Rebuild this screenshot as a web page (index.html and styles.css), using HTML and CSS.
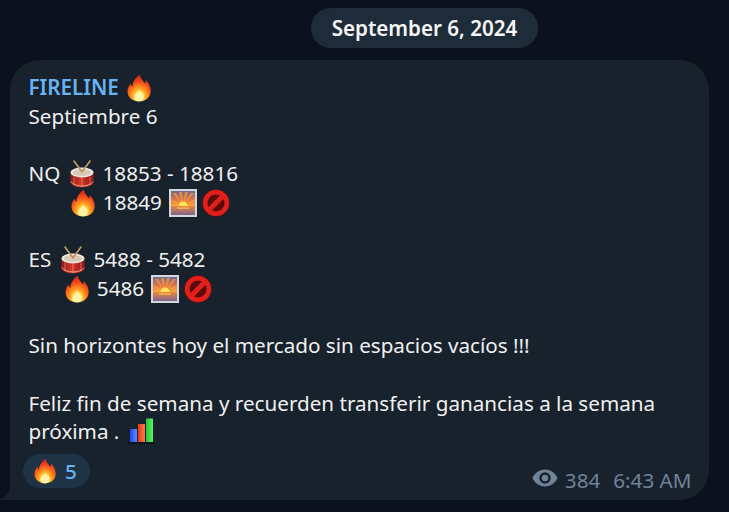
FILE: index.html
```html
<!DOCTYPE html>
<html lang="es">
<head>
<meta charset="utf-8">
<title>FIRELINE</title>
<link rel="stylesheet" href="styles.css">
</head>
<body>
<svg class="defs" width="0" height="0" aria-hidden="true">
  <defs>
    <radialGradient id="fireGrad" cx="0.5" cy="0.82" r="0.72">
      <stop offset="0" stop-color="#fff6c0"/>
      <stop offset="0.22" stop-color="#ffe14d"/>
      <stop offset="0.45" stop-color="#ff9a1f"/>
      <stop offset="0.8" stop-color="#f2441a"/>
      <stop offset="1" stop-color="#d92c14"/>
    </radialGradient>
    <linearGradient id="drumBody" x1="0" x2="1" y1="0" y2="0">
      <stop offset="0" stop-color="#8f1d14"/>
      <stop offset="0.45" stop-color="#d8342a"/>
      <stop offset="1" stop-color="#8c1a12"/>
    </linearGradient>
    <linearGradient id="sunSky" x1="0" x2="0" y1="0" y2="1">
      <stop offset="0" stop-color="#6f6a93"/>
      <stop offset="0.35" stop-color="#e0744a"/>
      <stop offset="0.62" stop-color="#f9a838"/>
      <stop offset="0.64" stop-color="#e88444"/>
      <stop offset="1" stop-color="#7e6590"/>
    </linearGradient>
    <linearGradient id="barBlue" x1="0" x2="1" y1="0" y2="0"><stop offset="0" stop-color="#1f45f0"/><stop offset="1" stop-color="#5f8dff"/></linearGradient>
    <linearGradient id="barRed" x1="0" x2="1" y1="0" y2="0"><stop offset="0" stop-color="#e33a1a"/><stop offset="1" stop-color="#ff7a48"/></linearGradient>
    <linearGradient id="barGreen" x1="0" x2="1" y1="0" y2="0"><stop offset="0" stop-color="#1fc934"/><stop offset="1" stop-color="#5cf06c"/></linearGradient>
    <symbol id="fire" viewBox="0 0 24 28">
      <path fill="url(#fireGrad)" d="M12.5 0.5c1 4.2 3.6 6.3 5.6 8.9 0.5-1.1 0.7-2.2 0.6-3.5 3 3 5 6.9 5 11.2 0 6.300-5 10.400-11.500 10.400S0.500 23.400 0.500 17.300c0-3.300 1.500-5.700 3.200-7.900 0.200 1.500 0.700 2.700 1.700 3.500C5.300 8.200 8.400 4.200 12.500 0.500z"/>
      <path fill="#fff3a8" d="M12.300 16c1.500 2 4.700 3.800 4.700 7 0 2.800-2.200 4.300-5 4.300s-5-1.600-5-4.100c0-3 3.800-4.200 5.300-7.200z"/>
    </symbol>
    <symbol id="drum" viewBox="0 0 24 28">
      <path stroke="#c9a565" stroke-width="1.500" stroke-linecap="round" d="M4 1l8 11M20 1l-8 11"/>
      <path fill="url(#drumBody)" d="M0.500 12v10.500c0 2.800 5.200 4.800 11.500 4.800s11.500-2 11.500-4.800V12z"/>
      <path stroke="#e88f75" stroke-width="0.700" fill="none" d="M4 17v8M12 18v9M20 17v8"/>
      <path fill="none" stroke="#f0a68e" stroke-width="1" d="M0.800 21.500c2 3 6.500 4.500 11.200 4.500s9.200-1.500 11.200-4.500"/>
      <ellipse cx="12" cy="12.500" rx="11.500" ry="5" fill="#f3ece4"/>
      <ellipse cx="12" cy="12.500" rx="9.500" ry="3.600" fill="#d9c9bb"/>
      <path stroke="#b98f52" stroke-width="1.500" stroke-linecap="round" d="M8.500 7l3.500 5M15.500 7l-3.500 5"/>
    </symbol>
    <symbol id="sunset" viewBox="0 0 28 28">
      <rect x="0" y="0" width="28" height="28" fill="#d3d8de"/>
      <rect x="2" y="2" width="24" height="24" fill="url(#sunSky)"/>
      <path fill="#f59a3c" opacity=".8" d="M14 17L4 4h3zM14 17L10 3h3zM14 17L16 3h3zM14 17L22 4h3zM14 17L2.500 10v3zM14 17L25.500 10v3z"/>
      <path fill="#ffe45c" d="M9.500 17a4.500 4.500 0 0 1 9 0z"/>
      <rect x="8" y="18.500" width="12" height="1.200" fill="#ffc34a"/>
    </symbol>
    <symbol id="noentry" viewBox="0 0 28 28">
      <circle cx="14" cy="14" r="13.500" fill="#a00d0a"/>
      <circle cx="14" cy="14" r="10.800" fill="none" stroke="#e0201a" stroke-width="4.500"/>
      <circle cx="14" cy="14" r="8.300" fill="#5a0c0b"/>
      <path stroke="#e0201a" stroke-width="4.800" d="M6.800 21.200L21.200 6.800"/>
    </symbol>
    <symbol id="chart" viewBox="0 0 26 26">
      <rect x="2" y="11" width="7" height="13" fill="url(#barBlue)"/>
      <rect x="10" y="6" width="7" height="18" fill="url(#barRed)"/>
      <rect x="18" y="0.500" width="7" height="23.500" fill="url(#barGreen)"/>
      <rect x="0" y="24" width="26" height="2" fill="#0a1320"/>
    </symbol>
    <symbol id="eye" viewBox="0 0 26 18">
      <path fill="#708499" fill-rule="evenodd" d="M13 0.500C7 0.500 2.500 4.500 0.500 9c2 4.500 6.500 8.500 12.500 8.500S23.500 13.500 25.500 9C23.500 4.500 19 0.500 13 0.500zM13 14.700a5.700 5.700 0 1 1 0-11.400 5.700 5.700 0 0 1 0 11.400zM13 5.800a3.200 3.200 0 1 0 0 6.400 3.200 3.200 0 0 0 0-6.400z"/>
    </symbol>
  </defs>
</svg>

<div class="date-row"><span class="date-pill">September 6, 2024</span></div>

<article class="bubble">
  <div class="line sender">FIRELINE <svg class="em em-sender"><use href="#fire"/></svg></div>
  <div class="line">Septiembre 6</div>
  <div class="line blank"></div>
  <div class="line">NQ <svg class="em em-a"><use href="#drum"/></svg> 18853 - 18816</div>
  <div class="line indent-nq"><svg class="em em-a"><use href="#fire"/></svg> 18849 <svg class="pic"><use href="#sunset"/></svg><svg class="pic pic-no"><use href="#noentry"/></svg></div>
  <div class="line blank"></div>
  <div class="line">ES <svg class="em em-a"><use href="#drum"/></svg> 5488 - 5482</div>
  <div class="line indent-es"><svg class="em em-a"><use href="#fire"/></svg> 5486 <svg class="pic"><use href="#sunset"/></svg><svg class="pic pic-no"><use href="#noentry"/></svg></div>
  <div class="line blank"></div>
  <div class="line">Sin horizontes hoy el mercado sin espacios vacíos !!!</div>
  <div class="line blank"></div>
  <div class="line">Feliz fin de semana y recuerden transferir ganancias a la semana</div>
  <div class="line">próxima . <svg class="chart"><use href="#chart"/></svg></div>
  <div class="footer">
    <span class="reaction"><svg class="re-fire"><use href="#fire"/></svg><span class="re-count">5</span></span>
    <span class="meta"><svg class="eye"><use href="#eye"/></svg><span class="views">384</span><span class="time">6:43 AM</span></span>
  </div>
</article>
</body>
</html>
```

FILE: styles.css
```css
* { box-sizing: border-box; }
html, body { margin: 0; height: 100%; }
body {
  background: #0c121d;
  font-family: "Noto Sans", "Open Sans", sans-serif;
  color: #f0f0f0;
  font-size: 20.65px;
  overflow: hidden;
}
.defs { display: block; height: 0; }
.date-row { padding: 8px 0 0 311px; height: 60px; }
.date-pill {
  display: inline-flex;
  align-items: center;
  justify-content: center;
  width: 227px;
  height: 40px;
  border-radius: 20px;
  background: #1e2c3a;
  font-size: 20.6px;
  font-weight: 600;
  color: #f5f5f5;
}
.bubble {
  position: relative;
  margin-left: 10px;
  width: 699px;
  height: 440px;
  padding: 13px 19px 0 18.5px;
  background: #18222d;
  border-radius: 30px 30px 30px 0;
}
.bubble::before {
  content: "";
  position: absolute;
  left: -10px;
  bottom: 0;
  width: 10px;
  height: 16px;
  background: radial-gradient(ellipse 10px 15px at 0 0, transparent 98%, #18222d 100%);
}
.line { height: 28.7px; line-height: 28.7px; white-space: nowrap; }
.sender { color: #6ab3f3; font-weight: 600; }
.em { width: 24px; height: 28px; vertical-align: -7px; }
.em-sender { margin-left: 3px; }
.em-a { margin: 0 3px 0 4.5px; }
.pic { width: 28px; height: 28px; vertical-align: -7px; margin-left: 1.5px; }
.pic-no { margin-left: 5px; }
.indent-nq { padding-left: 37.5px; }
.indent-es { padding-left: 31.5px; }
.chart { width: 26px; height: 26px; vertical-align: -5px; margin-left: 3px; }
.footer {
  display: flex;
  align-items: center;
  justify-content: space-between;
  margin: 8px -1.500px 0 -5.500px;
  height: 34px;
}
.reaction {
  display: inline-flex;
  align-items: center;
  width: 67px;
  height: 34px;
  padding-left: 11px;
  border-radius: 17px;
  background: #1f3347;
}
.re-fire { width: 22px; height: 26px; }
.re-count { margin-left: 9px; color: #6ab3f3; font-weight: 500; }
.meta {
  display: inline-flex;
  align-items: center;
  color: #708499;
  margin-top: 18px;
}
.eye { width: 26px; height: 18px; margin-top: -3px; }
.views { margin-left: 7px; }
.time { margin-left: 13px; }
```
